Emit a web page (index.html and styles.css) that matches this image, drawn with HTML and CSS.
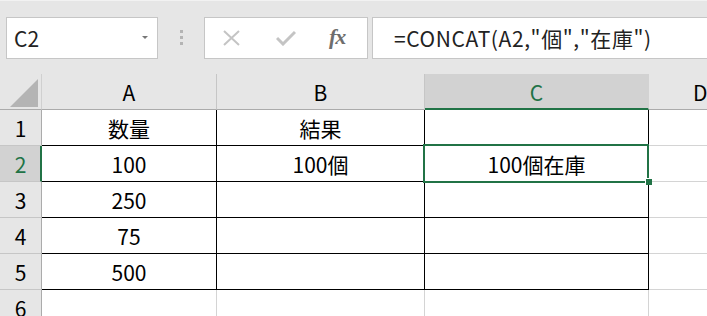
FILE: index.html
```html
<!DOCTYPE html>
<html lang="ja">
<head>
    <meta charset="UTF-8">
    <title>CONCAT - Excel</title>
    <link rel="stylesheet" href="styles.css">
</head>
<body>
    <div class="toolbar">
        <div class="name-box">
            <span>C2</span>
            <span class="arrow"></span>
        </div>
        <div class="grip"><i></i><i></i><i></i></div>
        <div class="fx-box">
            <svg class="icon" width="19" height="16" viewBox="0 0 19 16">
                <path d="M2 1 L17 15 M17 1 L2 15" stroke="#c4c4c4" stroke-width="2" fill="none"/>
            </svg>
            <svg class="icon" width="20" height="16" viewBox="0 0 20 16">
                <path d="M1 8 L7 14 L19 2" stroke="#c4c4c4" stroke-width="3" fill="none"/>
            </svg>
            <span class="fx"><i>f</i><i>x</i></span>
        </div>
        <div class="formula">=CONCAT(A2,"個","在庫")</div>
    </div>

    <div class="sheet">
        <div class="corner"><span class="tri"></span></div>
        <div class="col-head">A</div>
        <div class="col-head">B</div>
        <div class="col-head sel">C</div>
        <div class="col-head last">D</div>

        <div class="row-head">1</div>
        <div class="cell">数量</div>
        <div class="cell">結果</div>
        <div class="cell"></div>
        <div class="cell out"></div>

        <div class="row-head sel">2</div>
        <div class="cell">100</div>
        <div class="cell">100個</div>
        <div class="cell active">100個在庫</div>
        <div class="cell out"></div>

        <div class="row-head">3</div>
        <div class="cell">250</div>
        <div class="cell"></div>
        <div class="cell"></div>
        <div class="cell out"></div>

        <div class="row-head">4</div>
        <div class="cell">75</div>
        <div class="cell"></div>
        <div class="cell"></div>
        <div class="cell out"></div>

        <div class="row-head">5</div>
        <div class="cell">500</div>
        <div class="cell"></div>
        <div class="cell"></div>
        <div class="cell out"></div>

        <div class="row-head">6</div>
        <div class="cell out"></div>
        <div class="cell out"></div>
        <div class="cell out"></div>
        <div class="cell out"></div>
    </div>
</body>
</html>
```

FILE: styles.css
```css
body {
    margin: 0;
    font-family: "Noto Sans CJK JP", "Liberation Sans", sans-serif;
    color: #000;
    background: #fff;
    overflow: hidden;
}
.toolbar {
    background: #e6e6e6;
    border-top: 1px solid #f2f2f2;
    display: flex;
    align-items: flex-start;
    padding: 16px 0 0 6px;
    box-sizing: border-box;
    height: 74px;
}
.name-box {
    width: 152px;
    height: 42px;
    box-sizing: border-box;
    background: #fff;
    border: 1px solid #c6c6c6;
    display: flex;
    align-items: center;
    justify-content: space-between;
    padding: 0 9px 0 7px;
    font-size: 21px;
    color: #222;
}
.arrow {
    width: 0;
    height: 0;
    border-left: 3px solid transparent;
    border-right: 3px solid transparent;
    border-top: 3px solid #777;
    margin-bottom: 2px;
}
.grip {
    width: 46px;
    display: flex;
    flex-direction: column;
    align-items: center;
    gap: 3px;
    padding-top: 13px;
}
.grip i {
    display: block;
    width: 3px;
    height: 3px;
    background: #b4b4b4;
}
.fx-box {
    width: 164px;
    height: 42px;
    box-sizing: border-box;
    background: #fff;
    border: 1px solid #c6c6c6;
    display: flex;
    align-items: center;
    padding: 0 0 0 17px;
}
.fx-box .icon {
    margin-right: 35px;
}
.fx-box .icon + .icon {
    margin-right: 33px;
}
.fx {
    font-family: "Liberation Serif", serif;
    font-style: italic;
    font-weight: bold;
    font-size: 22px;
    color: #6e6e6e;
    letter-spacing: -1px;
    margin-top: -2px;
}
.formula {
    flex: 1;
    margin-left: 4px;
    height: 42px;
    box-sizing: border-box;
    background: #fff;
    border: 1px solid #c6c6c6;
    border-right: none;
    padding-left: 21px;
    display: flex;
    align-items: center;
    font-size: 21px;
    letter-spacing: 0.6px;
    color: #222;
    white-space: nowrap;
}
.sheet {
    display: grid;
    grid-template-columns: 42px 175px 208px 224px 1fr;
    grid-auto-rows: 36px;
}
.sheet > div {
    box-sizing: border-box;
    display: flex;
    align-items: center;
    justify-content: center;
    font-size: 21px;
    border-right: 1px solid #000;
    border-bottom: 1px solid #000;
}
.sheet > .corner {
    background: #e6e6e6;
    border-right: 1px solid #d0d0d0;
    border-bottom: 1px solid #ababab;
    align-items: flex-end;
    justify-content: flex-end;
    padding: 0 3px 2px 0;
}
.tri {
    width: 0;
    height: 0;
    border-left: 28px solid transparent;
    border-bottom: 28px solid #b4b4b4;
}
.sheet > .col-head {
    background: #e6e6e6;
    border-right: 1px solid #c6c6c6;
    border-bottom: 1px solid #ababab;
    padding-top: 1px;
}
.sheet > .col-head.sel {
    background: #d2d2d2;
    color: #217346;
    border-right-color: #d2d2d2;
    border-bottom: 2px solid #217346;
    padding-top: 2px;
}
.sheet > .col-head.last {
    justify-content: flex-start;
    padding-left: 44px;
}
.sheet > .row-head {
    background: #e6e6e6;
    border-right: 1px solid #ababab;
    border-bottom: 1px solid #c6c6c6;
}
.sheet > .row-head.sel {
    background: #d2d2d2;
    color: #217346;
    border-right: 2px solid #217346;
    padding-left: 1px;
}
.sheet > .cell.out {
    border-color: #d4d4d4;
}
.sheet > .cell.active {
    position: relative;
}
.active::before {
    content: "";
    position: absolute;
    left: -2px;
    top: -2px;
    right: -1px;
    bottom: -2px;
    border: 2px solid #217346;
}
.active::after {
    content: "";
    position: absolute;
    right: -4px;
    bottom: -4px;
    width: 6px;
    height: 6px;
    background: #217346;
    border-left: 1px solid #fff;
    border-top: 1px solid #fff;
}
```
